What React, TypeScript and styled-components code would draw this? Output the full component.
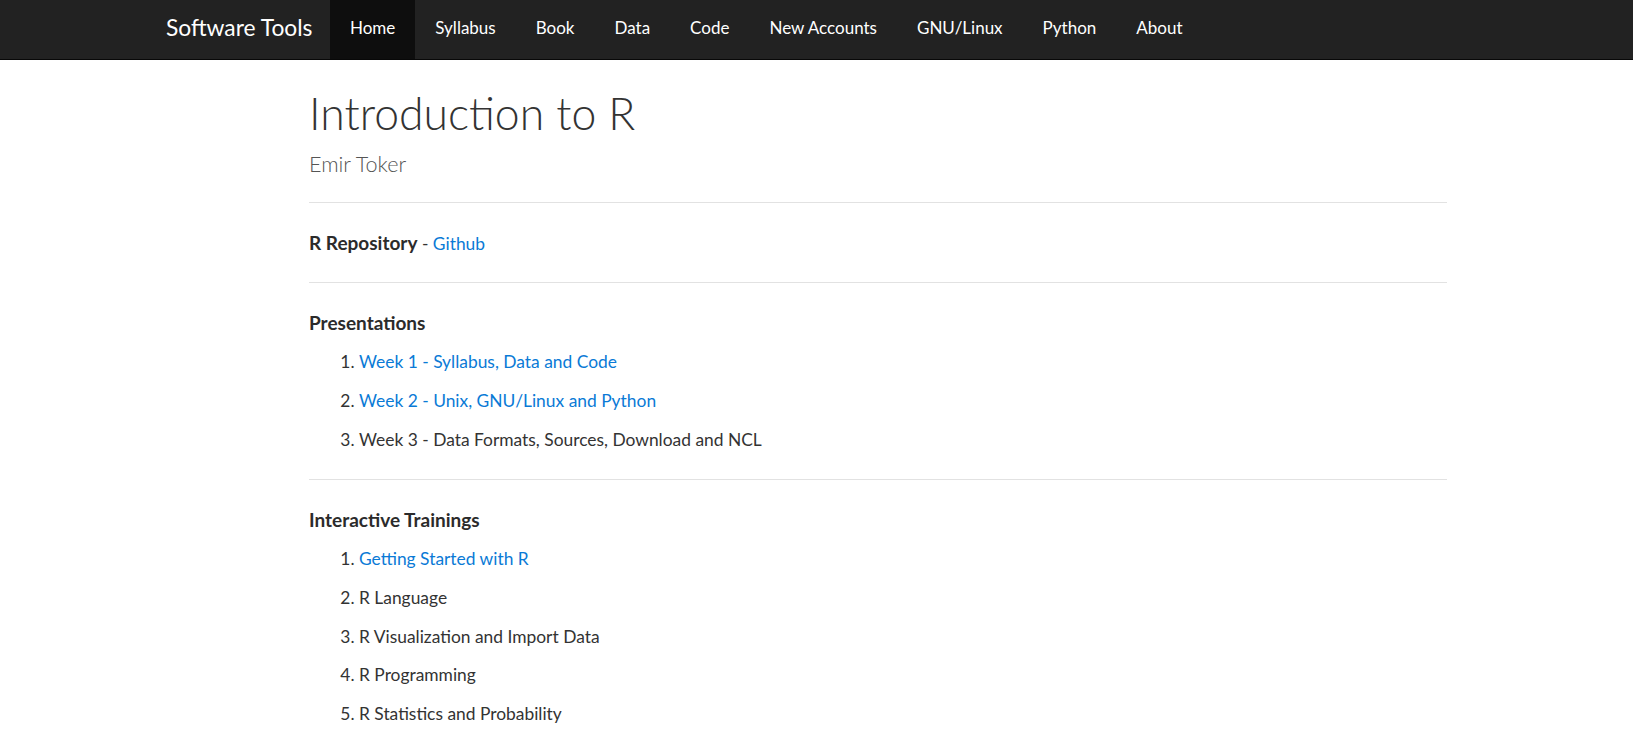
import React from "react";
import styled, { createGlobalStyle } from "styled-components";

const GlobalStyle = createGlobalStyle`
  html, body {
    margin: 0;
    padding: 0;
    background: #ffffff;
  }
  body {
    font-family: Lato, "Liberation Sans", sans-serif;
    color: #333333;
  }
  * { box-sizing: border-box; }
`;

const Navbar = styled.header`
  height: 60px;
  background: #222222;
  border-bottom: 1px solid #080808;
`;

const NavInner = styled.div`
  display: flex;
  align-items: stretch;
  height: 59px;
  padding-left: 151px;
`;

const Brand = styled.a`
  display: block;
  width: 179px;
  padding: 0 0 4px 15px;
  font-size: 22.8px;
  line-height: 55px;
  color: #ffffff;
  text-decoration: none;
  white-space: nowrap;
`;

const NavList = styled.ul`
  display: flex;
  margin: 0;
  padding: 0;
  list-style: none;
`;

const NavItem = styled.li`
  display: block;
`;

const NavLink = styled.a<{ $active?: boolean }>`
  display: block;
  height: 59px;
  padding: 0 20px 4px;
  font-size: 17px;
  line-height: 55px;
  color: #ffffff;
  text-decoration: none;
  white-space: nowrap;
  background: ${(p) => (p.$active ? "#0e0e0e" : "transparent")};
`;

const Main = styled.main`
  width: 1138px;
  margin-left: 309px;
`;

const Title = styled.h1`
  margin: 25px 0 0;
  font-size: 44.5px;
  line-height: 56px;
  font-weight: 300;
  color: #333333;
`;

const Subtitle = styled.p`
  margin: 8px 0 0;
  font-size: 21.6px;
  line-height: 30px;
  font-weight: 300;
  color: #555555;
`;

const Rule = styled.hr<{ $top?: number }>`
  margin: ${(p) => p.$top ?? 19}px 0 21px;
  border: 0;
  border-top: 1px solid #e2e2e2;
  height: 0;
`;

const Para = styled.p`
  margin: 0;
  font-size: 17.4px;
  line-height: 39px;
  color: #333333;
`;

const Strong = styled.strong`
  font-size: 19px;
  line-height: 1;
  font-weight: 700;
  color: #2b2b2b;
`;

const Link = styled.a`
  color: #0a7ad6;
  text-decoration: none;
`;

const List = styled.ol`
  margin: 0;
  padding-left: 50px;
  font-size: 17.4px;
  line-height: 38.9px;
  color: #333333;
`;

const Item = styled.li``;

const navItems = [
  "Home",
  "Syllabus",
  "Book",
  "Data",
  "Code",
  "New Accounts",
  "GNU/Linux",
  "Python",
  "About",
];

type Entry = { text: string; link?: boolean };

const presentations: Entry[] = [
  { text: "Week 1 - Syllabus, Data and Code", link: true },
  { text: "Week 2 - Unix, GNU/Linux and Python", link: true },
  { text: "Week 3 - Data Formats, Sources, Download and NCL" },
];

const trainings: Entry[] = [
  { text: "Getting Started with R", link: true },
  { text: "R Language" },
  { text: "R Visualization and Import Data" },
  { text: "R Programming" },
  { text: "R Statistics and Probability" },
];

const Section = ({ title, items }: { title: string; items: Entry[] }) => (
  <>
    <Para>
      <Strong>{title}</Strong>
    </Para>
    <List>
      {items.map((it) => (
        <Item key={it.text}>
          {it.link ? <Link href="#">{it.text}</Link> : it.text}
        </Item>
      ))}
    </List>
  </>
);

export default function App() {
  return (
    <>
      <GlobalStyle />
      <Navbar>
        <NavInner>
          <Brand href="#">Software Tools</Brand>
          <NavList>
            {navItems.map((n) => (
              <NavItem key={n}>
                <NavLink href="#" $active={n === "Home"}>
                  {n}
                </NavLink>
              </NavItem>
            ))}
          </NavList>
        </NavInner>
      </Navbar>
      <Main>
        <Title>Introduction to R</Title>
        <Subtitle>Emir Toker</Subtitle>
        <Rule $top={23} />
        <Para>
          <Strong>R Repository</Strong> - <Link href="#">Github</Link>
        </Para>
        <Rule />
        <Section title="Presentations" items={presentations} />
        <Rule />
        <Section title="Interactive Trainings" items={trainings} />
      </Main>
    </>
  );
}
